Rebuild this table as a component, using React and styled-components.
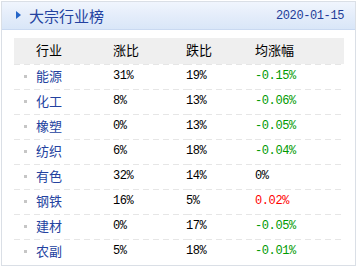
import React from 'react';
import styled, { createGlobalStyle } from 'styled-components';

const GlobalStyle = createGlobalStyle`
  html, body {
    margin: 0;
    padding: 0;
    background: #ffffff;
  }
  body {
    font-family: "Noto Sans CJK SC", "Liberation Sans", sans-serif;
  }
`;

const Panel = styled.div`
  margin: 1px;
  width: 355px;
  height: 265px;
  box-sizing: border-box;
  border: 1px solid #dadfe6;
  background: #ffffff;
`;

const Header = styled.div`
  display: flex;
  align-items: center;
  justify-content: space-between;
  height: 28px;
  box-sizing: border-box;
  padding: 0 11px 0 14px;
  background: linear-gradient(to bottom, #f0f5fd 0%, #e3ecfa 55%, #d9e6f8 100%);
  border-bottom: 1px solid #c9d9f1;
`;

const Title = styled.div`
  display: flex;
  align-items: center;
  gap: 5px;
  font-size: 15px;
  color: #2342a0;
  line-height: 1;
  padding-bottom: 1px;
`;

const Arrow = styled.span`
  width: 0;
  height: 0;
  border-top: 4px solid transparent;
  border-bottom: 4px solid transparent;
  border-left: 5px solid #2565c8;
  margin-right: 3px;
`;

const DateText = styled.div`
  font-family: "Liberation Mono", monospace;
  font-size: 12px;
  letter-spacing: -0.4px;
  color: #1f3c98;
`;

const Table = styled.div`
  margin: 8px 11px 0 12px;
  display: grid;
  grid-template-columns: 99px 73px 69px 1fr;
`;

const HeadCell = styled.div`
  height: 26px;
  background: #efefef;
  display: flex;
  align-items: center;
  padding-left: ${p => (p.$first ? '22px' : '0')};
  padding-bottom: 3px;
  box-sizing: border-box;
  font-size: 13px;
  color: #000000;
`;

const Cell = styled.div`
  height: 25px;
  box-sizing: border-box;
  display: flex;
  align-items: center;
  padding-top: 1px;
  padding-bottom: 3px;
  padding-left: ${p => (p.$first ? '10px' : '0')};
  background: repeating-linear-gradient(
      to right,
      #e6e6e6 0 6px,
      transparent 6px 10px
    )
    top left / 100% 1px no-repeat;
  font-size: 13px;
  color: ${p => p.$color || '#000000'};
`;

const Bullet = styled.span`
  width: 3px;
  height: 3px;
  background: #c6c6c6;
  margin-right: 9px;
  margin-top: 2px;
`;

const Name = styled.span`
  color: #2342a0;
`;

const Num = styled.span`
  font-family: "Liberation Mono", monospace;
  font-size: 12px;
  letter-spacing: -0.4px;
`;

const rows = [
  ['能源', '31%', '19%', '-0.15%'],
  ['化工', '8%', '13%', '-0.06%'],
  ['橡塑', '0%', '13%', '-0.05%'],
  ['纺织', '6%', '18%', '-0.04%'],
  ['有色', '32%', '14%', '0%'],
  ['钢铁', '16%', '5%', '0.02%'],
  ['建材', '0%', '17%', '-0.05%'],
  ['农副', '5%', '18%', '-0.01%'],
];

const changeColor = v => {
  if (v.startsWith('-')) return '#009a00';
  if (parseFloat(v) > 0) return '#ff0000';
  return '#000000';
};

export default function App() {
  return (
    <>
      <GlobalStyle />
      <Panel>
        <Header>
          <Title>
            <Arrow />
            大宗行业榜
          </Title>
          <DateText>2020-01-15</DateText>
        </Header>
        <Table>
          <HeadCell $first>行业</HeadCell>
          <HeadCell>涨比</HeadCell>
          <HeadCell>跌比</HeadCell>
          <HeadCell>均涨幅</HeadCell>
          {rows.map(([name, up, down, avg]) => (
            <React.Fragment key={name}>
              <Cell $first>
                <Bullet />
                <Name>{name}</Name>
              </Cell>
              <Cell>
                <Num>{up}</Num>
              </Cell>
              <Cell>
                <Num>{down}</Num>
              </Cell>
              <Cell $color={changeColor(avg)}>
                <Num>{avg}</Num>
              </Cell>
            </React.Fragment>
          ))}
        </Table>
      </Panel>
    </>
  );
}
